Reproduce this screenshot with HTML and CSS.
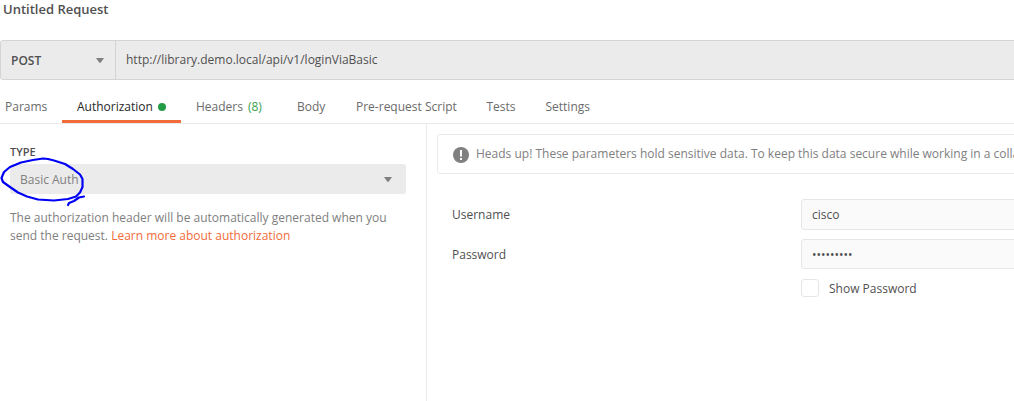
FILE: index.html
```html
<!DOCTYPE html>
<html lang="en">
<head>
<meta charset="utf-8">
<title>Untitled Request</title>
<link rel="stylesheet" href="styles.css">
</head>
<body>
<h1 class="title">Untitled Request</h1>
<div class="urlbar">
  <div class="method"><span>POST</span><svg class="caret" width="8" height="5" viewBox="0 0 8 5"><path d="M0 0H8L4.8 4.5Q4 5.300 3.2 4.5Z"/></svg></div>
  <div class="url">http://library.demo.local/api/v1/loginViaBasic</div>
</div>
<nav class="tabs">
  <div class="tab params">Params</div>
  <div class="tab active">Authorization<i class="dot"></i></div>
  <div class="tab headers">Headers<span class="count">(8)</span></div>
  <div class="tab body">Body</div>
  <div class="tab script">Pre-request Script</div>
  <div class="tab tests">Tests</div>
  <div class="tab">Settings</div>
</nav>
<main class="panes">
  <section class="left">
    <div class="label">TYPE</div>
    <div class="select"><span>Basic Auth</span><svg class="caret" width="8" height="5" viewBox="0 0 8 5"><path d="M0 0H8L4.8 4.5Q4 5.300 3.2 4.5Z"/></svg></div>
    <p class="help">The authorization header will be automatically generated when you<br>send the request. <a class="link">Learn more about authorization</a></p>
    <svg class="scribble" width="90" height="60" viewBox="0 150 90 60"><path d="M43 158.500L33 160L21 162.500L10 167L4 172L1.500 178L3 182L10 187L18 192.500L27 196.500L38 199.500L54 200.500L68 199L76 196.500L80 192.500L82.500 187L82.500 179L80 174.500L73 169L65 164L54 160.500L48 159L43 158.500M84 196.500L79 197.500L74 201L69 203L68 205"/></svg>
  </section>
  <section class="right">
    <div class="notice"><svg class="alert" width="16" height="16" viewBox="0 0 16 16"><circle cx="8" cy="8" r="8" fill="#808080"/><path d="M7 3H9V9.500H7ZM7 11H9V13H7Z" fill="#fff"/></svg><span class="message">Heads up! These parameters hold sensitive data. To keep this data secure while working in a colla</span></div>
    <div class="row"><span class="name">Username</span><div class="input">cisco</div></div>
    <div class="row"><span class="name">Password</span><div class="input secret">•••••••••</div></div>
    <div class="check"><i class="box"></i><span class="toggle">Show Password</span></div>
  </section>
</main>
</body>
</html>
```
FILE: styles.css
```css
* { box-sizing: border-box; }
body {
  margin: 0;
  width: 1014px;
  height: 401px;
  overflow: hidden;
  display: flex;
  flex-direction: column;
  background: #fff;
  color: #505050;
  font: 12px/18px "Open Sans", sans-serif;
  white-space: nowrap;
}
.title { margin: 0 0 0 3px; height: 40px; font-size: 13px; font-weight: 600; line-height: 18px; }
.urlbar {
  display: flex;
  width: 1024px;
  height: 40px;
  flex: none;
  border: 1px solid #d4d4d4;
  border-radius: 3px;
  background: #ebebeb;
}
.method {
  display: flex;
  align-items: center;
  justify-content: space-between;
  width: 115px;
  padding: 1px 11px 0 10px;
  border-right: 1px solid #d4d4d4;
  font-weight: 600;
}
.caret { fill: #808080; }
.url { padding: 10px 10px; }
.tabs { display: flex; height: 44px; flex: none; border-bottom: 1px solid #eaeaea; color: #6b6b6b; }
.tab { flex: none; padding-top: 18px; }
.params { width: 62px; padding-left: 5px; }
.active { display: flex; width: 119px; padding-left: 15px; border-bottom: 3px solid #f26b3a; color: #282828; }
.dot { width: 8px; height: 8px; margin: 5px 0 0 5px; border-radius: 50%; background: #249c47; }
.headers { width: 116px; padding-left: 15px; }
.count { margin-left: 5px; color: #37a355; }
.body { width: 59px; }
.script { width: 130.500px; }
.tests { width: 59px; }
.panes { display: flex; flex: 1; }
.left { position: relative; width: 427px; flex: none; padding: 19px 20px 0 10px; border-right: 1px solid #eaeaea; }
.label { height: 21px; font-size: 11px; font-weight: 600; }
.select {
  display: flex;
  align-items: center;
  justify-content: space-between;
  height: 30px;
  padding: 1px 14px 0 10px;
  border-radius: 3px;
  background: #ebebeb;
  color: #808080;
}
.help { margin: 15px 0 0; color: #808080; }
.link { color: #f26b3a; }
.scribble { position: absolute; left: 0; top: 26px; fill: none; stroke: #0000f5; stroke-width: 2.200; stroke-linecap: round; stroke-linejoin: round; }
.right { width: 587px; overflow: hidden; padding: 10px 0 0 10px; }
.notice {
  display: flex;
  width: 620px;
  height: 40px;
  margin-bottom: 25px;
  padding: 12px 0 0 15px;
  border: 1px solid #eaeaea;
  border-radius: 3px;
  color: #808080;
}
.alert { flex: none; }
.message { margin: -2px 0 0 7px; }
.row { display: flex; align-items: flex-start; width: 620px; height: 31px; margin-bottom: 9px; padding-left: 15px; }
.name { width: 349px; padding-top: 7px; flex: none; }
.input { width: 260px; height: 31px; padding: 6px 10px; border: 1px solid #e6e6e6; border-radius: 3px; background: #fafafa; }
.secret { height: 30px; }
.check { display: flex; gap: 10px; padding-left: 364px; }
.box { width: 18px; height: 18px; border: 1px solid #e6e6e6; border-radius: 3px; }
.toggle { padding-top: 1px; }
```
